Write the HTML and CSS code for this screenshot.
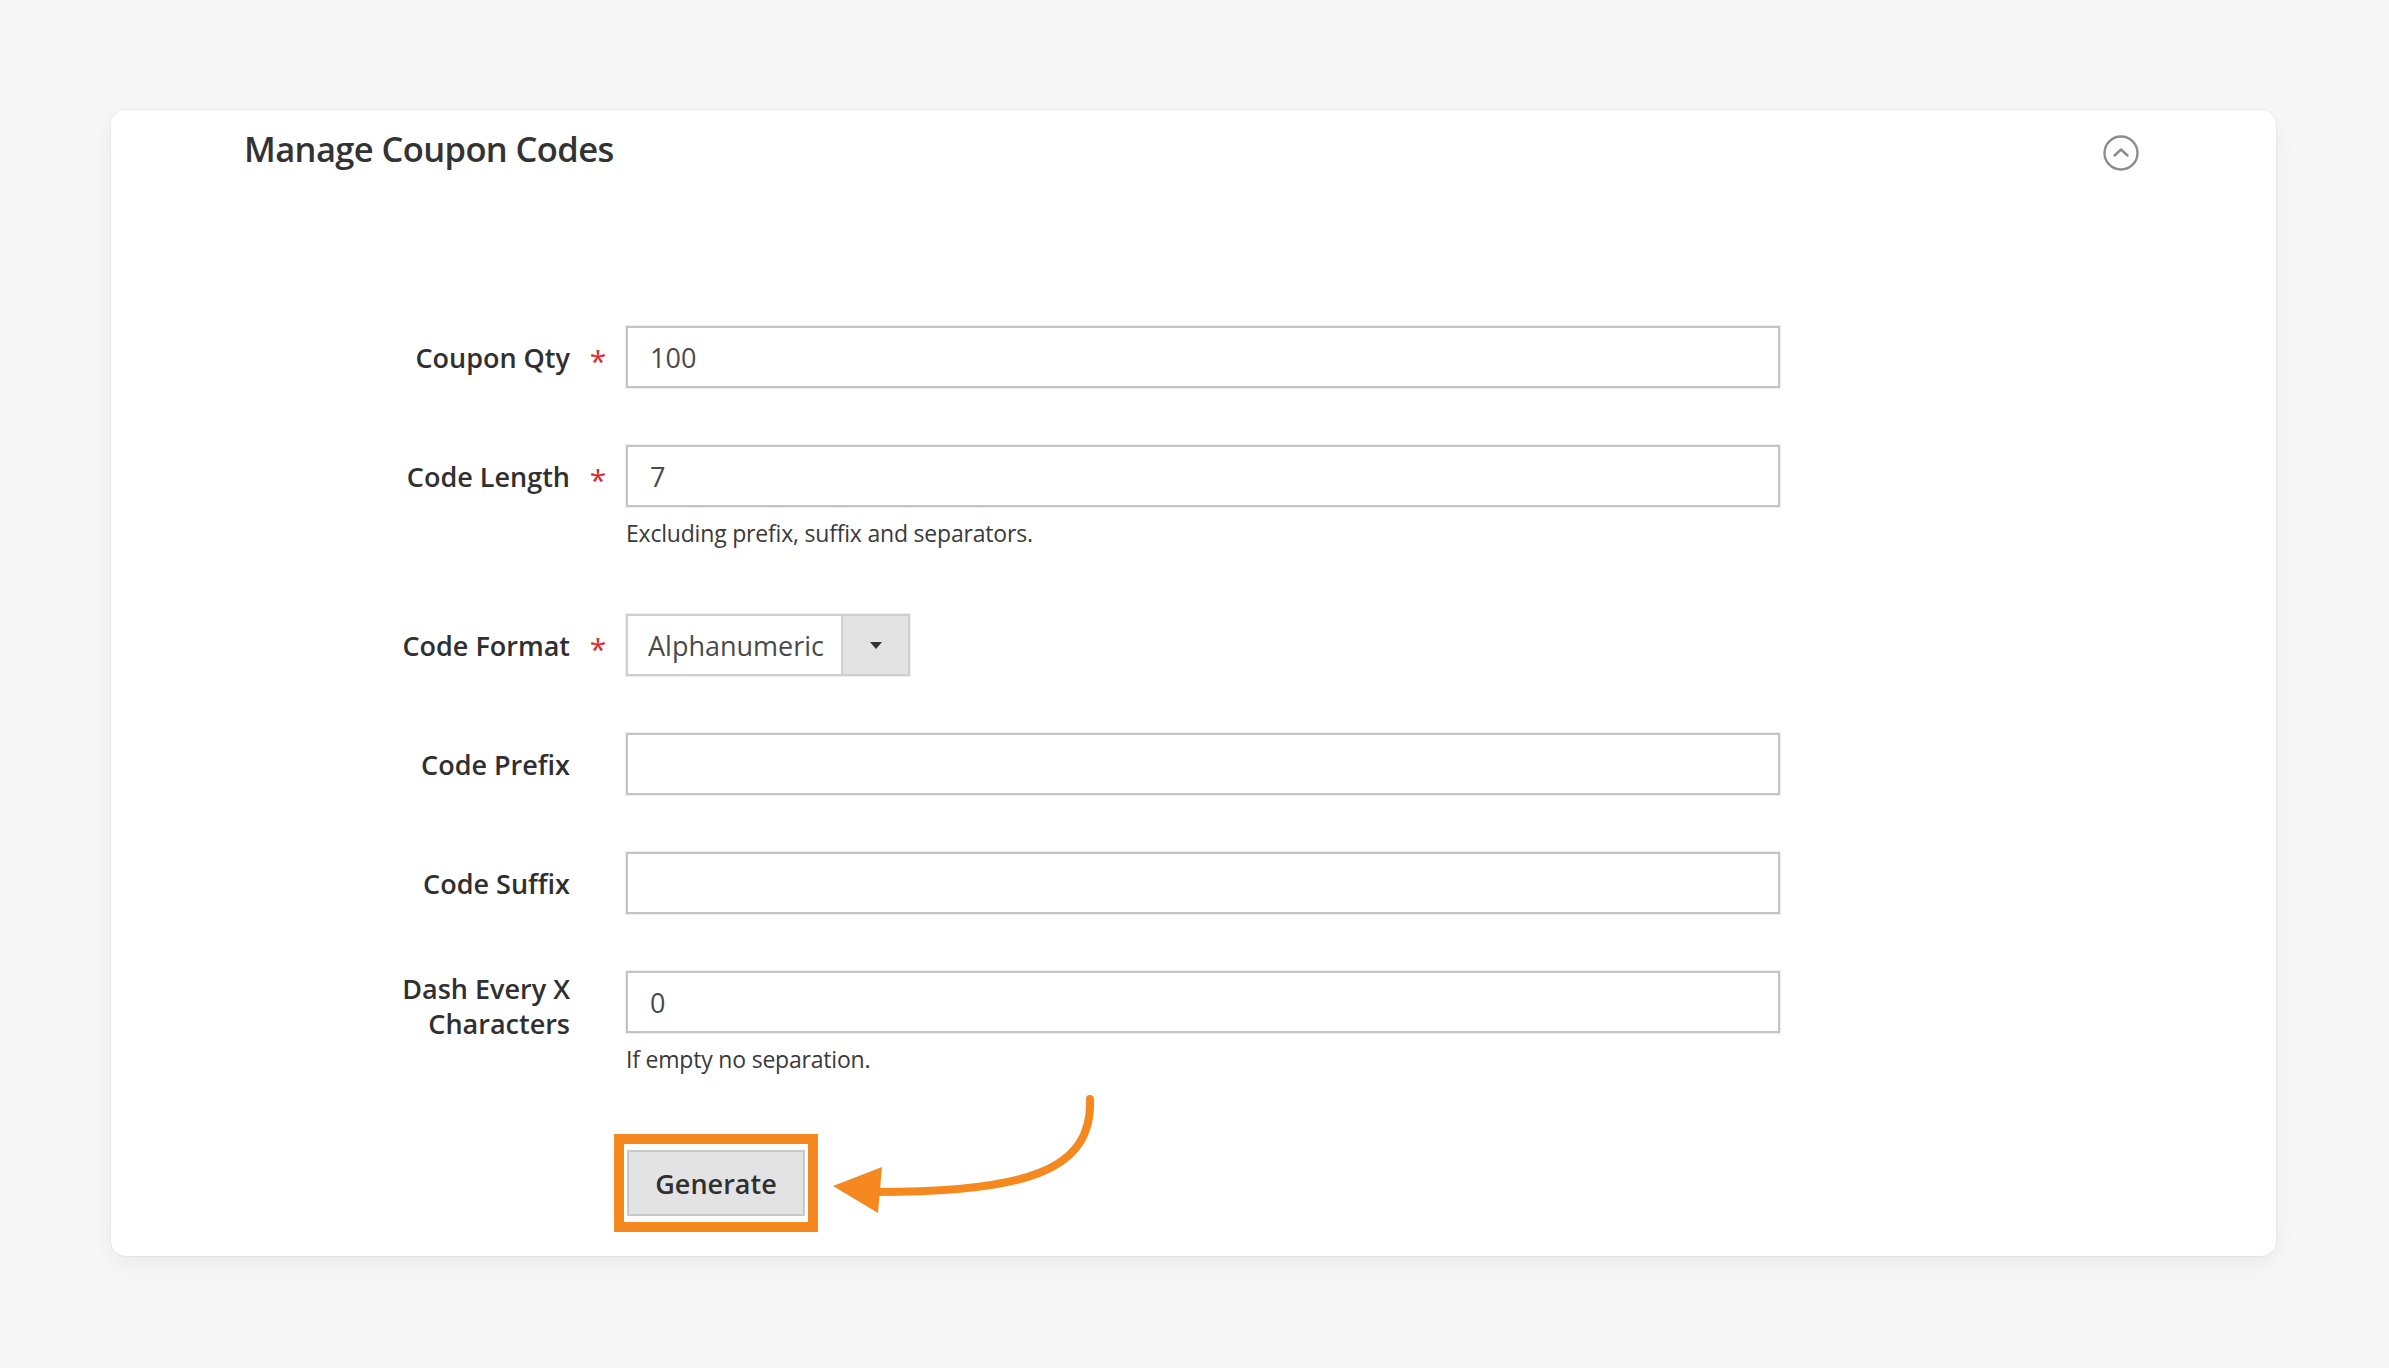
FILE: index.html
```html
<!DOCTYPE html>
<html lang="en">
<head>
<meta charset="utf-8">
<title>Manage Coupon Codes</title>
<link rel="stylesheet" href="styles.css">
</head>
<body>
<div class="page">
  <section class="card">
    <div class="card-head">
      <h2 class="card-title">Manage Coupon Codes</h2>
      <button class="collapse" type="button" aria-label="Collapse">
        <svg viewBox="0 0 40 40" width="40" height="40">
          <circle cx="20" cy="20" r="16.5" fill="none" stroke="#8c8c8c" stroke-width="2.4"/>
          <polyline points="13.5,22.5 20,16.5 26.5,22.5" fill="none" stroke="#8c8c8c" stroke-width="2.4" stroke-linecap="round" stroke-linejoin="round"/>
        </svg>
      </button>
    </div>

    <form class="coupon-form">
      <div class="field">
        <label class="field-label">Coupon Qty</label>
        <span class="req">*</span>
        <div class="control"><input class="text-input" type="text" value="100"></div>
      </div>

      <div class="field">
        <label class="field-label">Code Length</label>
        <span class="req">*</span>
        <div class="control">
          <input class="text-input" type="text" value="7">
          <div class="hint">Excluding prefix, suffix and separators.</div>
        </div>
      </div>

      <div class="field">
        <label class="field-label">Code Format</label>
        <span class="req">*</span>
        <div class="control">
          <div class="select">
            <span class="select-value">Alphanumeric</span>
            <span class="select-btn"><span class="caret"></span></span>
          </div>
        </div>
      </div>

      <div class="field">
        <label class="field-label">Code Prefix</label>
        <span class="req"></span>
        <div class="control"><input class="text-input" type="text" value=""></div>
      </div>

      <div class="field">
        <label class="field-label">Code Suffix</label>
        <span class="req"></span>
        <div class="control"><input class="text-input" type="text" value=""></div>
      </div>

      <div class="field field-last">
        <label class="field-label">Dash Every X Characters</label>
        <span class="req"></span>
        <div class="control">
          <input class="text-input" type="text" value="0">
          <div class="hint">If empty no separation.</div>
        </div>
      </div>

      <div class="field field-action">
        <span></span>
        <span></span>
        <div class="control action-cell">
          <span class="highlight"><button class="btn" type="button">Generate</button></span>
          <svg class="arrow" viewBox="0 0 280 135" width="280" height="135">
            <path d="M265 8 C268 80 200 101 52 101" fill="none" stroke="#f5891f" stroke-width="8" stroke-linecap="round"/>
            <polygon points="8,95 57,76 53,122" fill="#f5891f"/>
          </svg>
        </div>
      </div>
    </form>
  </section>
</div>
</body>
</html>
```

FILE: styles.css
```css
html, body {
  margin: 0;
  padding: 0;
}

body {
  background: #f7f7f7;
  font-family: "Open Sans", "Noto Sans", "Liberation Sans", sans-serif;
  color: #303030;
}

.page {
  padding: 110px 113px 113px 111px;
}

.card {
  background: #ffffff;
  border-radius: 15px;
  box-shadow: 0 0 0 1px rgba(0, 0, 0, 0.035), 0 8px 26px rgba(0, 0, 0, 0.06);
  padding: 15px 0 24px;
}

.card-head {
  display: flex;
  align-items: center;
  justify-content: space-between;
  height: 48px;
  padding: 0 135px 0 133px;
}

.card-title {
  margin: 0;
  font-size: 34.5px;
  font-weight: 600;
  line-height: 48px;
  color: #333333;
  letter-spacing: -0.6px;
}

.collapse {
  width: 40px;
  height: 40px;
  padding: 0;
  margin-top: 8px;
  border: 0;
  background: none;
  display: block;
}

.collapse svg {
  display: block;
}

.coupon-form {
  margin: 153px 0 0 274px;
}

.field {
  display: grid;
  grid-template-columns: 185px 56px 1154px;
  margin-bottom: 57px;
}

.field-last {
  margin-bottom: 51px;
}

.field-action {
  margin-bottom: 0;
}

.field-label {
  align-self: start;
  display: flex;
  align-items: center;
  justify-content: flex-end;
  text-align: right;
  min-height: 62px;
  font-size: 27px;
  font-weight: 600;
  line-height: 35px;
  color: #303030;
}

.req {
  align-self: start;
  display: flex;
  align-items: center;
  justify-content: center;
  height: 62px;
  padding-top: 8px;
  box-sizing: border-box;
  color: #e22626;
  font-size: 30px;
  line-height: 1;
}

.control {
  min-width: 0;
}

.text-input {
  display: block;
  box-sizing: border-box;
  width: 100%;
  height: 62px;
  margin: 0;
  padding: 0 22px;
  border: 2px solid #c4c4c4;
  border-radius: 0;
  box-shadow: 0 0 0 1px #eeeeee;
  background: #ffffff;
  font-family: "Open Sans", "Noto Sans", sans-serif;
  font-size: 27px;
  font-weight: 400;
  color: #4a4a4a;
  outline: none;
}

.hint {
  margin: 11px 0 9px;
  font-size: 23px;
  line-height: 30px;
  color: #3a3a3a;
  letter-spacing: -0.2px;
}

.select {
  display: flex;
  box-sizing: border-box;
  width: 284px;
  height: 62px;
  border: 2px solid #cfcfcf;
  box-shadow: 0 0 0 1px #eeeeee;
  background: #ffffff;
}

.select-value {
  flex: 1;
  display: flex;
  align-items: center;
  padding-left: 20px;
  font-size: 27px;
  color: #4a4a4a;
}

.select-btn {
  width: 65px;
  display: flex;
  align-items: center;
  justify-content: center;
  background: #e3e3e3;
  border-left: 2px solid #d2d2d2;
}

.caret {
  width: 0;
  height: 0;
  border-left: 6px solid transparent;
  border-right: 6px solid transparent;
  border-top: 7px solid #333333;
}

.action-cell {
  position: relative;
}

.highlight {
  display: inline-block;
  margin-left: -12px;
  padding: 6px 3px;
  border: 10px solid #f5891f;
}

.btn {
  display: block;
  box-sizing: border-box;
  width: 178px;
  height: 66px;
  padding: 0;
  background: #e3e3e3;
  border: 2px solid #c9c9c9;
  border-radius: 0;
  font-family: "Open Sans", "Noto Sans", sans-serif;
  font-size: 27px;
  font-weight: 600;
  color: #303030;
}

.arrow {
  position: absolute;
  left: 199px;
  top: -43px;
  overflow: visible;
}
```
